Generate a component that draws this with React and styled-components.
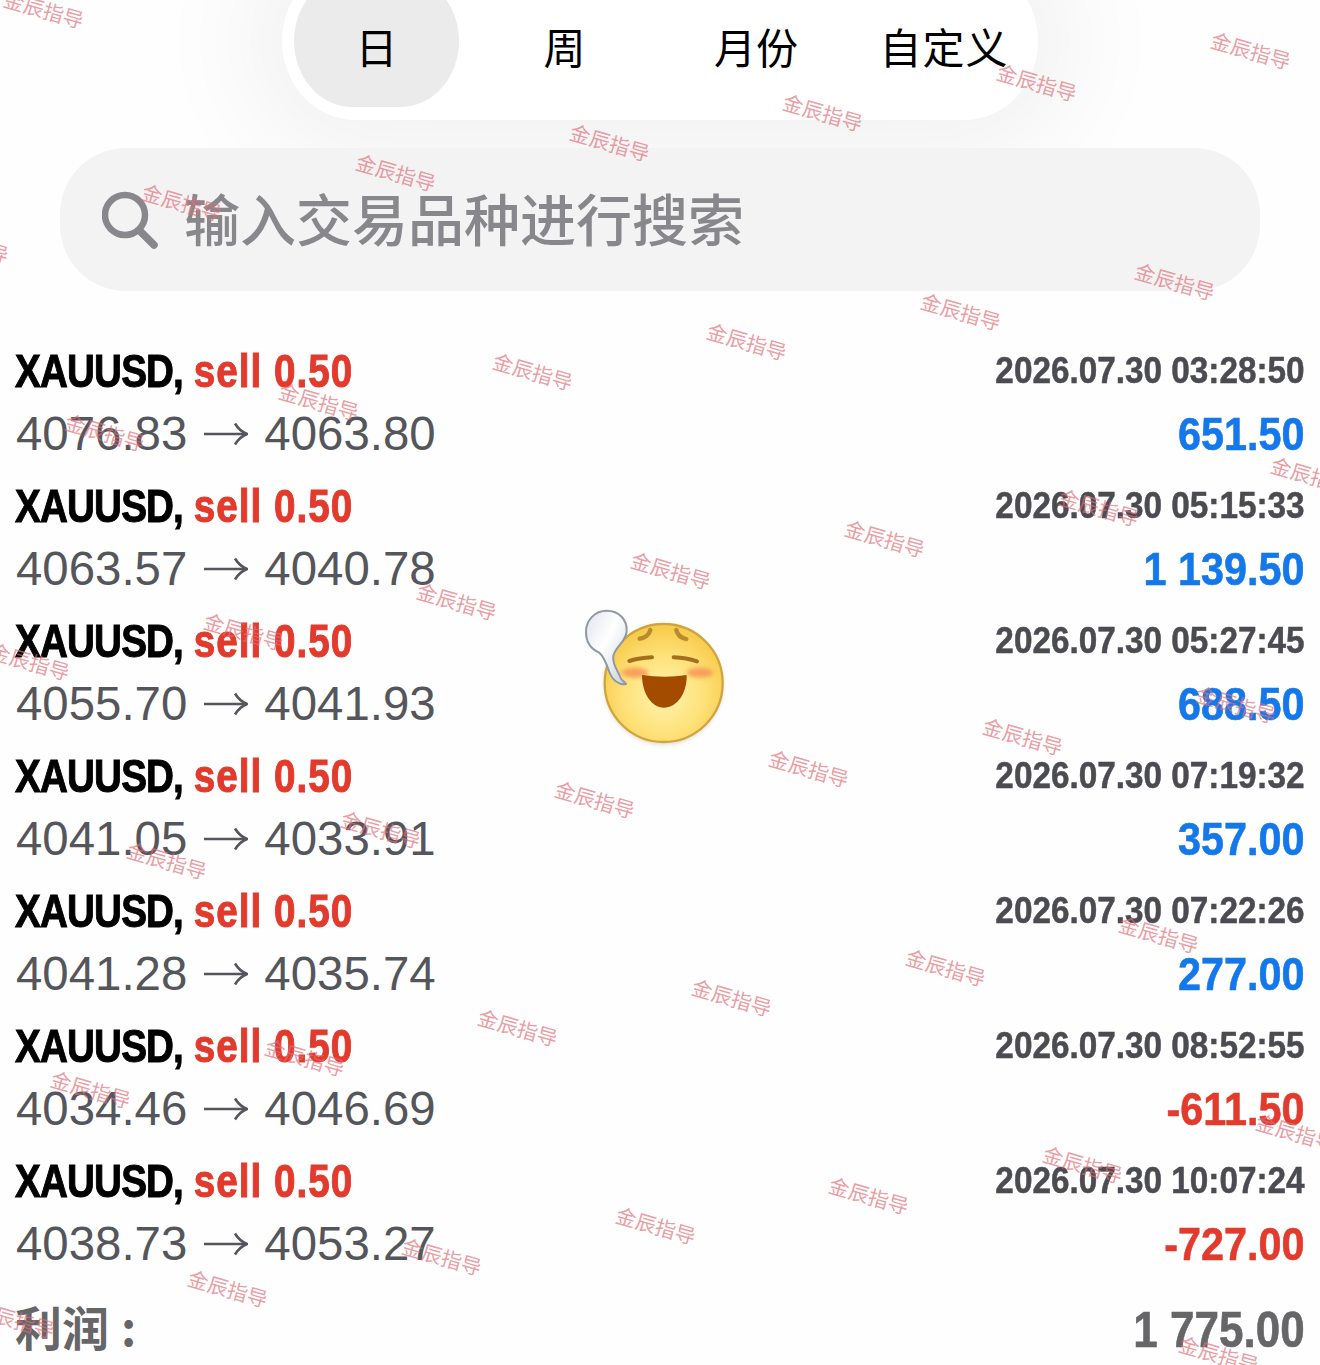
import React from 'react';
import styled, { createGlobalStyle } from 'styled-components';

const GlobalStyle = createGlobalStyle`
  html, body {
    margin: 0;
    padding: 0;
    background: #fff;
  }
  body {
    font-family: "Liberation Sans", "Noto Sans CJK SC", sans-serif;
  }
`;

const Page = styled.div`
  position: relative;
  width: 1320px;
  height: 1365px;
  overflow: hidden;
  background: #fefefe;
`;

const Header = styled.header`
  display: flex;
  flex-direction: column;
  align-items: center;
  margin-top: -38px;
`;

const Tabs = styled.nav`
  display: grid;
  grid-template-columns: 165px 165px 172px 158px;
  gap: 23px;
  width: 756px;
  height: 158px;
  box-sizing: border-box;
  padding: 13px 14px 13px 12px;
  border-radius: 78px / 84px;
  background: #fff;
  box-shadow: 0 0 110px 34px rgba(0, 0, 0, 0.055);
`;

const Tab = styled.div`
  display: flex;
  align-items: center;
  justify-content: center;
  padding-top: 10px;
  border-radius: 62px / 70px;
  background: ${props => props.$active ? '#ebebeb' : 'transparent'};
  color: #000;
  font: 400 42px "Noto Sans CJK SC", sans-serif;
  line-height: 1;
`;

const TabLabel = styled.span`
  letter-spacing: ${props => props.$wide ? '1px' : '0'};
`;

const Search = styled.div`
  position: relative;
  display: flex;
  align-items: center;
  gap: 28px;
  width: 1200px;
  height: 143px;
  box-sizing: border-box;
  margin-top: 28px;
  padding: 0 0 0 42px;
  border-radius: 66px;
  background: #f3f3f4;
  color: #88888c;
  font: 500 56px "Noto Sans CJK SC", sans-serif;
`;

const Placeholder = styled.span`
  margin-left: -2px;
  line-height: 1;
  padding-bottom: 6px;
`;

const List = styled.main`
  display: flex;
  flex-direction: column;
  margin-top: 49px;
  padding: 0 15px;
`;

const Row = styled.section`
  display: grid;
  grid-template-columns: 1fr auto;
  grid-auto-rows: 62px;
  align-items: center;
  height: 135px;
`;

/* the reference uses a condensed bold face, squeezed Liberation stands in for it */
const Title = styled.div`
  color: #000;
  font-size: 46px;
  font-weight: 700;
  line-height: 1;
  white-space: nowrap;
  -webkit-text-stroke: 1px currentColor;
  transform: scaleX(0.84);
  transform-origin: left center;
`;

const Symbol = styled.span`
  letter-spacing: -1px;
`;

const Sell = styled.span`
  color: #e23a2c;
  letter-spacing: 1.2px;
`;

const Prices = styled.div`
  display: flex;
  align-items: center;
  gap: 16.5px;
  margin-left: 1px;
  padding-top: 2px;
  color: #55565b;
  font-size: 47.4px;
  line-height: 1;
`;

const Time = styled.div`
  padding-bottom: 2px;
  color: #4b4b52;
  font-size: 37px;
  font-weight: 700;
  line-height: 1;
  text-align: right;
  white-space: nowrap;
  -webkit-text-stroke: 0.5px currentColor;
  transform: scaleX(0.9);
  transform-origin: right center;
`;

const Profit = styled.div`
  color: ${props => props.$loss ? '#e23a2c' : '#1478ea'};
  font-size: 47px;
  font-weight: 700;
  line-height: 1;
  text-align: right;
  white-space: nowrap;
  -webkit-text-stroke: 0.6px currentColor;
  transform: scaleX(0.88);
  transform-origin: right center;
`;

const Total = styled.footer`
  display: flex;
  align-items: center;
  justify-content: space-between;
  height: 90px;
  color: #666668;
  font-weight: 700;
`;

const TotalLabel = styled.div`
  padding-bottom: 8px;
  font: 700 47px "Noto Sans CJK SC", sans-serif;
  line-height: 1.2;
`;

const Colon = styled.span`
  margin-left: 12px;
`;

const TotalValue = styled.div`
  font-size: 50px;
  line-height: 1;
  white-space: nowrap;
  -webkit-text-stroke: 0.6px currentColor;
  transform: scaleX(0.88);
  transform-origin: right center;
`;

const Sticker = styled.svg`
  position: absolute;
  left: 570px;
  top: 600px;
  width: 170px;
  height: 160px;
`;

const Watermark = styled.span`
  position: absolute;
  left: ${props => props.$x + 1}px;
  top: ${props => props.$y - 1}px;
  transform: translate(-50%, -50%) rotate(16deg);
  color: rgba(224, 110, 120, 0.68);
  font: 400 20.5px "Noto Sans CJK SC", sans-serif;
  line-height: 1;
  white-space: nowrap;
  pointer-events: none;
`;

const trades = [
  ['4076.83', '4063.80', '2026.07.30 03:28:50', '651.50'],
  ['4063.57', '4040.78', '2026.07.30 05:15:33', '1 139.50'],
  ['4055.70', '4041.93', '2026.07.30 05:27:45', '688.50'],
  ['4041.05', '4033.91', '2026.07.30 07:19:32', '357.00'],
  ['4041.28', '4035.74', '2026.07.30 07:22:26', '277.00'],
  ['4034.46', '4046.69', '2026.07.30 08:52:55', '-611.50'],
  ['4038.73', '4053.27', '2026.07.30 10:07:24', '-727.00']
];

const marks = [
  [43, 10], [1250, 51], [1036, 83], [822, 113], [609, 143], [395, 173], [181, 203], [-32, 245],
  [1174, 282], [960, 312], [746, 342], [532, 372], [318, 402], [104, 433],
  [1310, 476], [1098, 508], [884, 539], [670, 571], [456, 602], [243, 632], [29, 662],
  [1235, 705], [1022, 737], [808, 769], [594, 800], [380, 830], [166, 861],
  [1158, 935], [945, 968], [731, 998], [517, 1028], [304, 1058], [90, 1090],
  [1295, 1133], [1082, 1165], [868, 1196], [655, 1226], [441, 1257], [227, 1289], [14, 1320],
  [1218, 1355]
];

const SearchIcon = () => (
  <svg width="56" height="58" viewBox="0 0 56 58" fill="none" stroke="#88888c" strokeLinecap="round">
    <circle cx="23" cy="24" r="20" strokeWidth="6.5" />
    <path d="M38 40 L52 54" strokeWidth="7.5" />
  </svg>
);

const Arrow = () => (
  <svg width="44" height="24" viewBox="0 0 44 24" fill="none" stroke="#55565b" strokeWidth="2.6">
    <path d="M0 12 H43" />
    <path d="M31 1.5 C34 6.5 38 10 43 12 C38 14 34 17.5 31 22.5" />
  </svg>
);

const Emoji = () => (
  <Sticker viewBox="0 0 510 480">
    <defs>
      <radialGradient id="face" cx="50%" cy="60%" r="56%">
        <stop offset="0%" stopColor="#fff3b0" />
        <stop offset="60%" stopColor="#fee27a" />
        <stop offset="100%" stopColor="#f8cc4e" />
      </radialGradient>
      <linearGradient id="bubble" x1="0" y1="0" x2="1" y2="1">
        <stop offset="0%" stopColor="#dfe3ea" />
        <stop offset="45%" stopColor="#ffffff" />
        <stop offset="100%" stopColor="#c9cfd9" />
      </linearGradient>
      <filter id="soft" x="-30%" y="-30%" width="160%" height="160%">
        <feGaussianBlur stdDeviation="7" />
      </filter>
      <filter id="drop" x="-20%" y="-20%" width="140%" height="140%">
        <feGaussianBlur stdDeviation="6" />
      </filter>
    </defs>
    <circle cx="281" cy="256" r="178" fill="#8a7a50" opacity="0.25" filter="url(#drop)" />
    <circle cx="281" cy="249" r="177" fill="url(#face)" stroke="#d0a63c" strokeWidth="7" />
    <ellipse cx="195" cy="218" rx="40" ry="15" fill="#f58f52" opacity="0.8" filter="url(#soft)" />
    <ellipse cx="390" cy="218" rx="40" ry="15" fill="#f58f52" opacity="0.8" filter="url(#soft)" />
    <g fill="none" stroke="#b98a30" strokeWidth="13" strokeLinecap="round">
      <path d="M209 116 C225 114 238 104 241 90" />
      <path d="M319 90 C322 104 334 114 349 117" />
    </g>
    <g fill="none" stroke="#a3701f" strokeWidth="12" strokeLinecap="round">
      <path d="M178 183 C200 176 222 173 246 172" />
      <path d="M311 172 C335 173 360 177 381 184" />
    </g>
    <path d="M216 225 Q285 236 350 225 C352 280 320 323 282 323 C245 323 216 280 216 225 Z" fill="#a34c00" />
    <path
      d="M110 32 C148 32 172 60 170 94 C168 125 136 140 130 168 C126 195 146 215 152 234 C156 244 168 248 168 252 C148 256 128 242 118 216 C110 195 104 172 88 158 C60 146 48 122 48 96 C48 60 75 32 110 32 Z"
      fill="url(#bubble)"
      stroke="#8f98a6"
      strokeWidth="6"
      strokeLinejoin="round"
    />
  </Sticker>
);

export default function App() {
  return (
    <Page>
      <GlobalStyle />
      <Header>
        <Tabs>
          <Tab $active>日</Tab>
          <Tab>周</Tab>
          <Tab>月份</Tab>
          <Tab><TabLabel $wide>自定义</TabLabel></Tab>
        </Tabs>
        <Search>
          <SearchIcon />
          <Placeholder>输入交易品种进行搜索</Placeholder>
        </Search>
      </Header>
      <List>
        {trades.map(([open, close, time, profit]) => (
          <Row key={time}>
            <Title><Symbol>XAUUSD,</Symbol> <Sell>sell 0.50</Sell></Title>
            <Time>{time}</Time>
            <Prices>
              <span>{open}</span>
              <Arrow />
              <span>{close}</span>
            </Prices>
            <Profit $loss={profit.startsWith('-')}>{profit}</Profit>
          </Row>
        ))}
        <Total>
          <TotalLabel>利润<Colon>:</Colon></TotalLabel>
          <TotalValue>1 775.00</TotalValue>
        </Total>
      </List>
      <Emoji />
      {marks.map(([x, y]) => (
        <Watermark key={`${x}-${y}`} $x={x} $y={y}>金辰指导</Watermark>
      ))}
    </Page>
  );
}
